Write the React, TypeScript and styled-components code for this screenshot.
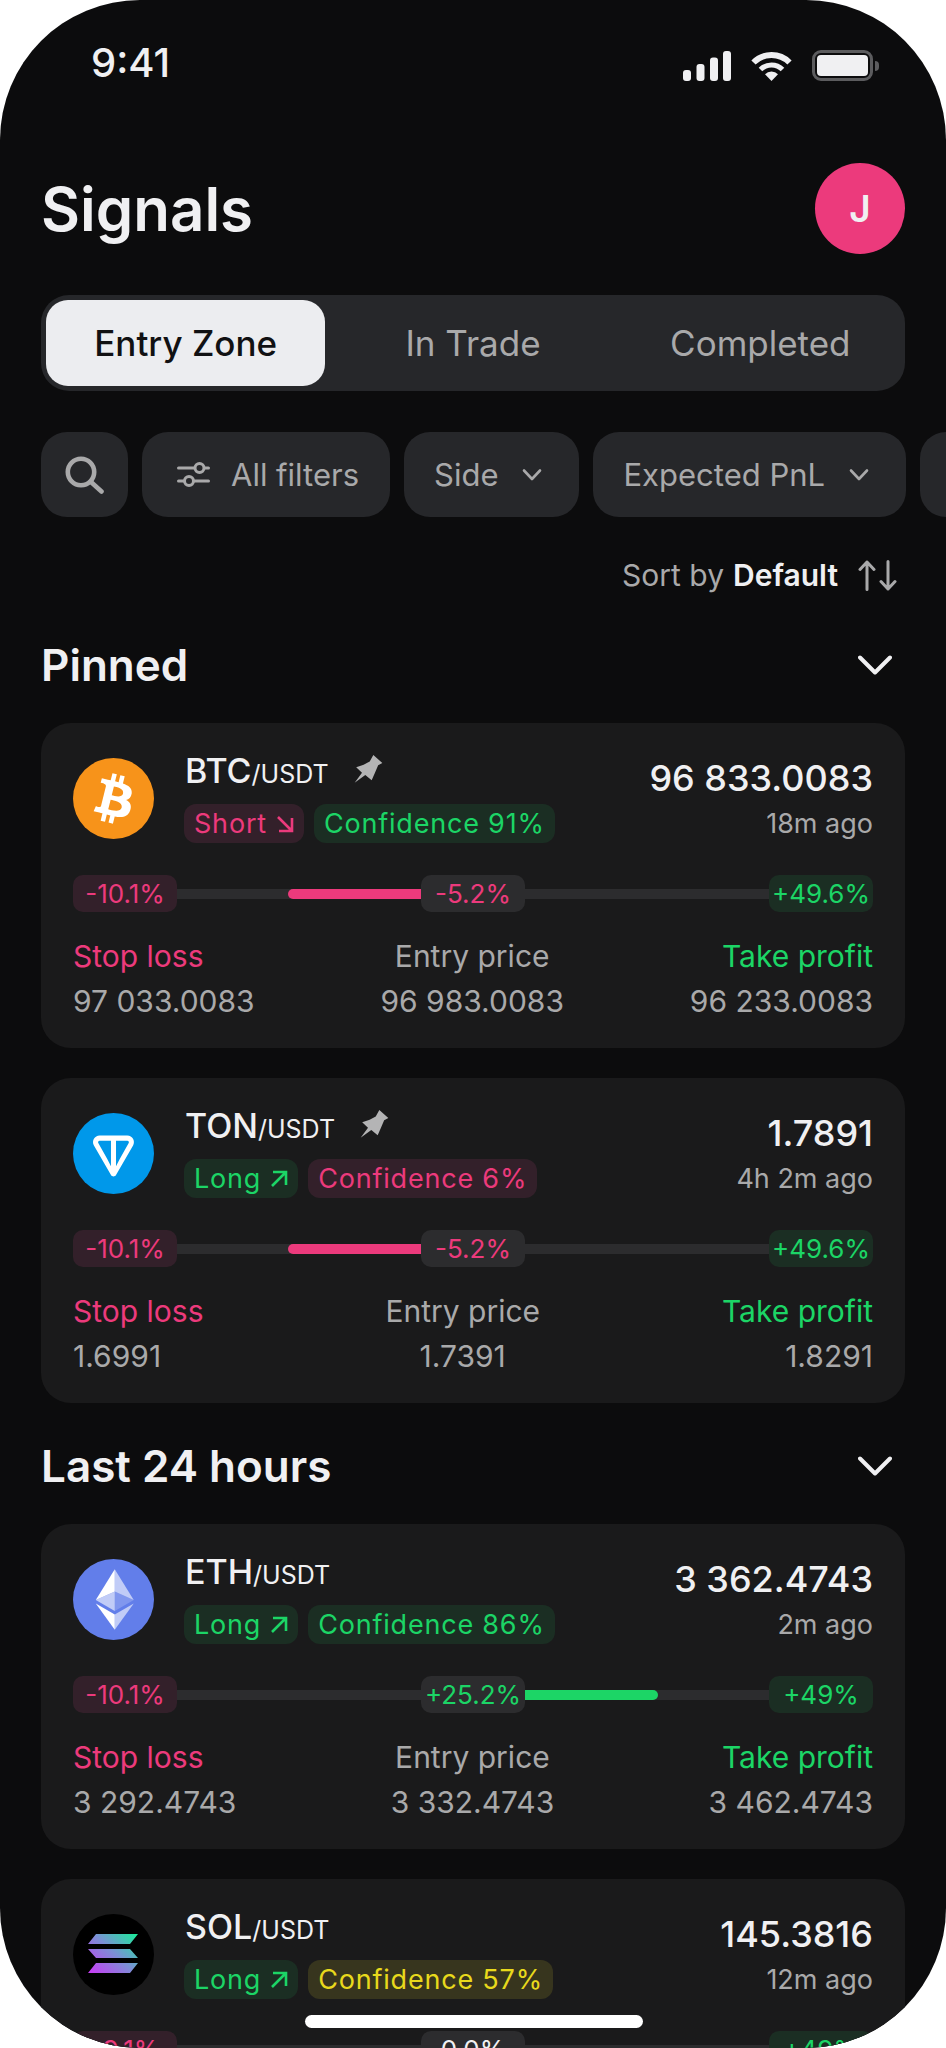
import React from "react";
import styled, { createGlobalStyle } from "styled-components";

const pink = "#EC3A7C";
const green = "#1CD566";
const yellow = "#E8D91C";
const grey = "#A9A9AA";
const white = "#F0F0F2";

type Tone = "pink" | "green" | "yellow" | "neutral";
const toneText: Record<Tone, string> = { pink, green, yellow, neutral: grey };
const toneBg: Record<Tone, string> = { pink: "#33202A", green: "#1B2E23", yellow: "#37351E", neutral: "#2C2C2E" };

const Global = createGlobalStyle`
  html, body { margin: 0; padding: 0; background: #fff; }
  * { box-sizing: border-box; }
  body { font-family: Inter, "Noto Sans", sans-serif; }
`;

const Phone = styled.div`
  position: relative;
  width: 946px;
  height: 2048px;
  border-radius: 140px;
  overflow: hidden;
  background: #0c0c0d;
  padding: 0 41px;
`;
const StatusBar = styled.div`
  display: flex;
  justify-content: space-between;
  align-items: center;
  padding: 39px 25px 0 50px;
  height: 87px;
`;
const Clock = styled.div`
  font-size: 40px;
  line-height: 48px;
  font-weight: 500;
  color: ${white};
`;
const StatusIcons = styled.div`
  display: flex;
  align-items: center;
  gap: 19px;
  margin-top: 5px;
`;
const Battery = styled.div`
  width: 68px;
  height: 31px;
  display: flex;
  align-items: center;
`;
const BatteryBody = styled.div`
  width: 61px;
  height: 31px;
  padding: 2px;
  border: 3px solid #5c5c5e;
  border-radius: 9px;
`;
const BatteryFill = styled.div`
  height: 100%;
  border-radius: 4px;
  background: ${white};
`;
const BatteryNub = styled.div`
  width: 4px;
  height: 10px;
  margin-left: 2px;
  border-radius: 0 4px 4px 0;
  background: #5c5c5e;
`;
const Header = styled.header`
  display: flex;
  justify-content: space-between;
  align-items: center;
  margin-top: 76px;
`;
const Title = styled.h1`
  margin: 0;
  font-size: 60px;
  line-height: 72px;
  font-weight: 600;
  color: ${white};
`;
const Avatar = styled.div`
  width: 90px;
  height: 91px;
  border-radius: 50%;
  background: ${pink};
  color: ${white};
  display: flex;
  align-items: center;
  justify-content: center;
  font-size: 37px;
  font-weight: 600;
`;
const Tabs = styled.div`
  display: flex;
  gap: 8px;
  height: 96px;
  margin-top: 41px;
  padding: 5px;
  border-radius: 28px;
  background: #26272a;
`;
const Tab = styled.div<{ $active?: boolean }>`
  flex: 1;
  display: flex;
  align-items: center;
  justify-content: center;
  border-radius: 22px;
  font-size: 35px;
  font-weight: ${(p) => (p.$active ? 500 : 400)};
  color: ${(p) => (p.$active ? "#111113" : grey)};
  background: ${(p) => (p.$active ? "#ECEDF0" : "transparent")};
`;
const Filters = styled.div`
  display: flex;
  gap: 14px;
  height: 85px;
  margin: 41px -41px 0 0;
  overflow: hidden;
`;
const Filter = styled.div`
  flex: none;
  height: 85px;
  display: flex;
  align-items: center;
  gap: 24px;
  padding: 0 37px 0 30px;
  border-radius: 26px;
  background: #26272a;
  color: ${grey};
  font-size: 31px;
  font-weight: 400;
  svg { flex: none; }
`;
const SearchFilter = styled(Filter)`
  width: 87px;
  padding: 0;
  justify-content: center;
`;
const AllFilter = styled(Filter)`
  gap: 21px;
  padding: 0 31px 0 35px;
`;
const SortRow = styled.div`
  display: flex;
  justify-content: flex-end;
  align-items: center;
  height: 36px;
  margin-top: 40px;
  padding-right: 7px;
  font-size: 30px;
  color: ${grey};
  svg { margin-left: 20px; }
`;
const SortValue = styled.b`
  margin-left: 9px;
  font-weight: 600;
  color: ${white};
`;
const SectionHead = styled.div<{ $first?: boolean }>`
  display: flex;
  justify-content: space-between;
  align-items: center;
  height: 54px;
  margin-top: ${(p) => (p.$first ? 45 : 36)}px;
  padding-right: 13px;
`;
const SectionTitle = styled.h2`
  margin: 0;
  font-size: 44px;
  line-height: 54px;
  font-weight: 600;
  color: ${white};
`;
const Cards = styled.div`
  display: flex;
  flex-direction: column;
  gap: 30px;
  margin-top: 31px;
`;
const Card = styled.article`
  padding: 26px 32px 28px;
  border-radius: 30px;
  background: #1a1a1b;
`;
const CardTop = styled.div`
  display: flex;
  align-items: flex-start;
`;
const CoinIcon = styled.svg`
  flex: none;
  width: 81px;
  height: 81px;
  margin: 9px 30px 0 0;
`;
const Info = styled.div`
  flex: 1;
  min-width: 0;
`;
const PairRow = styled.div`
  display: flex;
  align-items: flex-start;
  height: 44px;
  padding-left: 1px;
`;
const Pair = styled.div`
  font-size: 34px;
  line-height: 44px;
  font-weight: 500;
  color: ${white};
`;
const Quote = styled.span`
  font-size: 25px;
  font-weight: 400;
`;
const PinIcon = styled.svg`
  width: 30px;
  height: 30px;
  margin: 5px 0 0 24px;
`;
const TagRow = styled.div`
  display: flex;
  gap: 10px;
  margin-top: 11px;
`;
const Tag = styled.div<{ $tone: Tone }>`
  height: 39px;
  display: flex;
  align-items: center;
  gap: 9px;
  padding: 0 10px;
  border-radius: 12px;
  font-size: 27px;
  letter-spacing: 0.8px;
  color: ${(p) => toneText[p.$tone]};
  background: ${(p) => toneBg[p.$tone]};
`;
const Quoted = styled.div`
  text-align: right;
`;
const Price = styled.div`
  margin-top: 7px;
  font-size: 36px;
  line-height: 44px;
  font-weight: 500;
  color: ${white};
`;
const Ago = styled.div`
  margin-top: 6px;
  font-size: 27px;
  line-height: 36px;
  color: ${grey};
`;
const RangeRow = styled.div`
  display: flex;
  align-items: center;
  margin-top: 32px;
`;
const Pill = styled.div<{ $tone: Tone; $text?: string }>`
  flex: none;
  width: 104px;
  height: 37px;
  display: flex;
  align-items: center;
  justify-content: center;
  border-radius: 10px;
  font-size: 26px;
  color: ${(p) => p.$text ?? toneText[p.$tone]};
  background: ${(p) => toneBg[p.$tone]};
`;
const Half = styled.div<{ $side: "left" | "right" }>`
  flex: 1;
  height: 10px;
  display: flex;
  justify-content: ${(p) => (p.$side === "left" ? "flex-end" : "flex-start")};
  background: #2c2c2e;
`;
const Fill = styled.div<{ $side: "left" | "right"; $tone: Tone }>`
  width: 133px;
  height: 10px;
  background: ${(p) => toneText[p.$tone]};
  border-radius: ${(p) => (p.$side === "left" ? "5px 0 0 5px" : "0 5px 5px 0")};
`;
const Levels = styled.div`
  display: flex;
  justify-content: space-between;
  margin-top: 25px;
`;
const Level = styled.div<{ $align: "left" | "center" | "right" }>`
  text-align: ${(p) => p.$align};
`;
const LevelLabel = styled.div<{ $tone: Tone }>`
  font-size: 30px;
  line-height: 38px;
  color: ${(p) => toneText[p.$tone]};
`;
const LevelValue = styled.div`
  margin-top: 7px;
  font-size: 30px;
  line-height: 38px;
  color: ${grey};
`;
const HomeIndicator = styled.div`
  position: absolute;
  left: 305px;
  top: 2015px;
  width: 338px;
  height: 13px;
  border-radius: 7px;
  background: #fff;
`;

const Chevron = ({ large }: { large?: boolean }) =>
  large ? (
    <svg width="34" height="20" viewBox="0 0 34 20" fill="none" stroke={white} strokeWidth="4" strokeLinecap="round" strokeLinejoin="round">
      <path d="M2 2.5 17 17.5 32 2.5" />
    </svg>
  ) : (
    <svg width="20" height="14" viewBox="0 0 20 14" fill="none" stroke={grey} strokeWidth="2.6" strokeLinecap="round" strokeLinejoin="round">
      <path d="M2 2.5 10 11 18 2.5" />
    </svg>
  );

const ArrowDownRight = () => (
  <svg width="18" height="18" viewBox="0 0 18 18" fill="none" stroke={pink} strokeWidth="2.6">
    <path d="M2 2 16 16M3 16h13V3" />
  </svg>
);
const ArrowUpRight = () => (
  <svg width="18" height="18" viewBox="0 0 18 18" fill="none" stroke={green} strokeWidth="2.6">
    <path d="M2 16 16 2M3 2h13v13" />
  </svg>
);

const Pin = () => (
  <PinIcon viewBox="15 9 31 31">
    <path d="M36 10 45.3 18.3 41 20.7 37.7 28.3 34.3 36 27.7 30.7 16.7 38.7 24.3 28.3 18.3 22.7 26 20 32.3 16.7Z" fill="#B4B4B5" />
  </PinIcon>
);

const BtcIcon = () => (
  <CoinIcon viewBox="0 0 32 32">
    <circle cx="16" cy="16" r="16" fill="#F7931A" />
    <path fill="#fff" d="M23.189 14.02c.314-2.096-1.283-3.223-3.465-3.975l.708-2.84-1.728-.43-.69 2.765c-.454-.114-.92-.22-1.385-.326l.695-2.783L15.596 6l-.708 2.839c-.376-.086-.746-.17-1.104-.26l.002-.009-2.384-.595-.46 1.846s1.283.294 1.256.312c.7.175.826.638.805 1.006l-.806 3.235c.048.012.11.03.18.057l-.183-.045-1.13 4.532c-.086.212-.303.531-.793.41.018.025-1.256-.313-1.256-.313l-.858 1.978 2.25.561c.418.105.828.215 1.231.318l-.715 2.872 1.727.43.708-2.84c.472.127.93.245 1.378.357l-.706 2.828 1.728.43.715-2.866c2.948.558 5.164.333 6.097-2.333.752-2.146-.037-3.385-1.588-4.192 1.13-.26 1.98-1.003 2.207-2.538zm-3.95 5.538c-.533 2.147-4.148.986-5.32.695l.95-3.805c1.172.293 4.929.872 4.37 3.11zm.535-5.569c-.487 1.953-3.495.96-4.47.717l.86-3.45c.975.243 4.118.696 3.61 2.733z" />
  </CoinIcon>
);
const TonIcon = () => (
  <CoinIcon viewBox="0 0 56 56">
    <circle cx="28" cy="28" r="28" fill="#0098EA" />
    <path fill="#fff" d="M37.5603 15.6277H18.4386C14.9228 15.6277 12.6944 19.4202 14.4632 22.4861L26.2644 42.9409C27.0345 44.2765 28.9644 44.2765 29.7345 42.9409L41.5381 22.4861C43.3045 19.4251 41.0761 15.6277 37.5627 15.6277H37.5603ZM26.2548 36.8068L23.6847 31.8327L17.4833 20.7414C17.0742 20.0315 17.5795 19.1218 18.4362 19.1218H26.2524V36.8092L26.2548 36.8068ZM38.5108 20.739L32.3118 31.8351L29.7417 36.8068V19.1194H37.5579C38.4146 19.1194 38.9199 20.0291 38.5108 20.739Z" />
  </CoinIcon>
);
const EthIcon = () => (
  <CoinIcon viewBox="0 0 32 32">
    <circle cx="16" cy="16" r="16" fill="#627EEA" />
    <g fill="#fff">
      <path fillOpacity=".602" d="M16.498 4v8.87l7.497 3.35z" />
      <path d="M16.498 4L9 16.22l7.498-3.35z" />
      <path fillOpacity=".602" d="M16.498 21.968v6.027L24 17.616z" />
      <path d="M16.498 27.995v-6.028L9 17.616z" />
      <path fillOpacity=".2" d="M16.498 20.573l7.497-4.353-7.497-3.348z" />
      <path fillOpacity=".602" d="M9 16.22l7.498 4.353v-7.701z" />
    </g>
  </CoinIcon>
);
const SolIcon = () => (
  <CoinIcon viewBox="0 0 81 81">
    <defs>
      <linearGradient id="sol" gradientUnits="userSpaceOnUse" x1="62" y1="16" x2="20" y2="62">
        <stop offset="0" stopColor="#14F195" />
        <stop offset="0.5" stopColor="#7C8FD6" />
        <stop offset="1" stopColor="#C83BF5" />
      </linearGradient>
    </defs>
    <circle cx="40.5" cy="40.5" r="40.5" fill="#000" />
    <path fill="url(#sol)" d="M23 20H65L57 30H15ZM15 35H57L65 44H23ZM23 49H65L57 59H15Z" />
  </CoinIcon>
);

interface Signal {
  base: string;
  icon: React.ReactNode;
  pinned?: boolean;
  side: "Long" | "Short";
  confidence: string;
  confTone: Tone;
  price: string;
  ago: string;
  low: string;
  mid: string;
  high: string;
  fill?: "left" | "right";
  midTone: Tone;
  stop: string;
  entry: string;
  take: string;
}

const pinned: Signal[] = [
  { base: "BTC", icon: <BtcIcon />, pinned: true, side: "Short", confidence: "Confidence 91%", confTone: "green", price: "96 833.0083", ago: "18m ago", low: "-10.1%", mid: "-5.2%", high: "+49.6%", fill: "left", midTone: "pink", stop: "97 033.0083", entry: "96 983.0083", take: "96 233.0083" },
  { base: "TON", icon: <TonIcon />, pinned: true, side: "Long", confidence: "Confidence 6%", confTone: "pink", price: "1.7891", ago: "4h 2m ago", low: "-10.1%", mid: "-5.2%", high: "+49.6%", fill: "left", midTone: "pink", stop: "1.6991", entry: "1.7391", take: "1.8291" },
];
const recent: Signal[] = [
  { base: "ETH", icon: <EthIcon />, side: "Long", confidence: "Confidence 86%", confTone: "green", price: "3 362.4743", ago: "2m ago", low: "-10.1%", mid: "+25.2%", high: "+49%", fill: "right", midTone: "green", stop: "3 292.4743", entry: "3 332.4743", take: "3 462.4743" },
  { base: "SOL", icon: <SolIcon />, side: "Long", confidence: "Confidence 57%", confTone: "yellow", price: "145.3816", ago: "12m ago", low: "-9.1%", mid: "0.0%", high: "+49%", midTone: "neutral", stop: "140.3816", entry: "145.3816", take: "150.3816" },
];

const SignalCard = ({ s }: { s: Signal }) => (
  <Card>
    <CardTop>
      {s.icon}
      <Info>
        <PairRow>
          <Pair>
            {s.base}
            <Quote>/USDT</Quote>
          </Pair>
          {s.pinned && <Pin />}
        </PairRow>
        <TagRow>
          <Tag $tone={s.side === "Long" ? "green" : "pink"}>
            {s.side}
            {s.side === "Long" ? <ArrowUpRight /> : <ArrowDownRight />}
          </Tag>
          <Tag $tone={s.confTone}>{s.confidence}</Tag>
        </TagRow>
      </Info>
      <Quoted>
        <Price>{s.price}</Price>
        <Ago>{s.ago}</Ago>
      </Quoted>
    </CardTop>
    <RangeRow>
      <Pill $tone="pink">{s.low}</Pill>
      <Half $side="left">{s.fill === "left" && <Fill $side="left" $tone="pink" />}</Half>
      <Pill $tone="neutral" $text={s.midTone === "neutral" ? white : toneText[s.midTone]}>
        {s.mid}
      </Pill>
      <Half $side="right">{s.fill === "right" && <Fill $side="right" $tone="green" />}</Half>
      <Pill $tone="green">{s.high}</Pill>
    </RangeRow>
    <Levels>
      <Level $align="left">
        <LevelLabel $tone="pink">Stop loss</LevelLabel>
        <LevelValue>{s.stop}</LevelValue>
      </Level>
      <Level $align="center">
        <LevelLabel $tone="neutral">Entry price</LevelLabel>
        <LevelValue>{s.entry}</LevelValue>
      </Level>
      <Level $align="right">
        <LevelLabel $tone="green">Take profit</LevelLabel>
        <LevelValue>{s.take}</LevelValue>
      </Level>
    </Levels>
  </Card>
);

export default function App() {
  return (
    <>
      <Global />
      <Phone>
        <StatusBar>
          <Clock>9:41</Clock>
          <StatusIcons>
            <svg width="48" height="30" viewBox="0 0 48 30" fill={white}>
              <rect x="0" y="19" width="8" height="11" rx="3" />
              <rect x="13.5" y="13" width="8" height="17" rx="3" />
              <rect x="27" y="6.5" width="8" height="23.5" rx="3" />
              <rect x="40" y="0" width="8" height="30" rx="3" />
            </svg>
            <svg width="43" height="30" viewBox="0 0 43 30" fill="none" stroke={white}>
              <path d="M3.5 11.5A25.5 25.5 0 0 1 39.5 11.5" strokeWidth="6" />
              <path d="M10.5 18.5A15.5 15.5 0 0 1 32.5 18.5" strokeWidth="5" />
              <path d="M21.5 30 15 23.2A9 9 0 0 1 28 23.2Z" fill={white} stroke="none" />
            </svg>
            <Battery>
              <BatteryBody>
                <BatteryFill />
              </BatteryBody>
              <BatteryNub />
            </Battery>
          </StatusIcons>
        </StatusBar>
        <Header>
          <Title>Signals</Title>
          <Avatar>J</Avatar>
        </Header>
        <Tabs>
          <Tab $active>Entry Zone</Tab>
          <Tab>In Trade</Tab>
          <Tab>Completed</Tab>
        </Tabs>
        <Filters>
          <SearchFilter>
            <svg width="39" height="38" viewBox="0 0 39 38" fill="none" stroke={grey} strokeWidth="4.6" strokeLinecap="round">
              <circle cx="16" cy="16" r="13.2" />
              <path d="M26 26 36.5 35.5" />
            </svg>
          </SearchFilter>
          <AllFilter>
            <svg width="33" height="25" viewBox="0 0 33 25" fill="none" stroke={grey} strokeWidth="3" strokeLinecap="round">
              <path d="M1.5 6H17M28 6h3.5M1.5 19H6.5M17.5 19h14" />
              <circle cx="22.5" cy="6" r="4.5" />
              <circle cx="12" cy="19" r="4.5" />
            </svg>
            All filters
          </AllFilter>
          <Filter>
            Side
            <Chevron />
          </Filter>
          <Filter>
            Expected PnL
            <Chevron />
          </Filter>
          <Filter>
            Volume
            <Chevron />
          </Filter>
        </Filters>
        <SortRow>
          Sort by
          <SortValue>Default</SortValue>
          <svg width="40" height="31" viewBox="0 0 40 31" fill="none" stroke={grey} strokeWidth="3" strokeLinecap="round" strokeLinejoin="round">
            <path d="M9 29.5V2M2 9.5 9 2 16 9.5M30 1.5V29M23 21.5 30 29 37 21.5" />
          </svg>
        </SortRow>
        <SectionHead $first>
          <SectionTitle>Pinned</SectionTitle>
          <Chevron large />
        </SectionHead>
        <Cards>
          {pinned.map((s) => (
            <SignalCard key={s.base} s={s} />
          ))}
        </Cards>
        <SectionHead>
          <SectionTitle>Last 24 hours</SectionTitle>
          <Chevron large />
        </SectionHead>
        <Cards>
          {recent.map((s) => (
            <SignalCard key={s.base} s={s} />
          ))}
        </Cards>
        <HomeIndicator />
      </Phone>
    </>
  );
}
